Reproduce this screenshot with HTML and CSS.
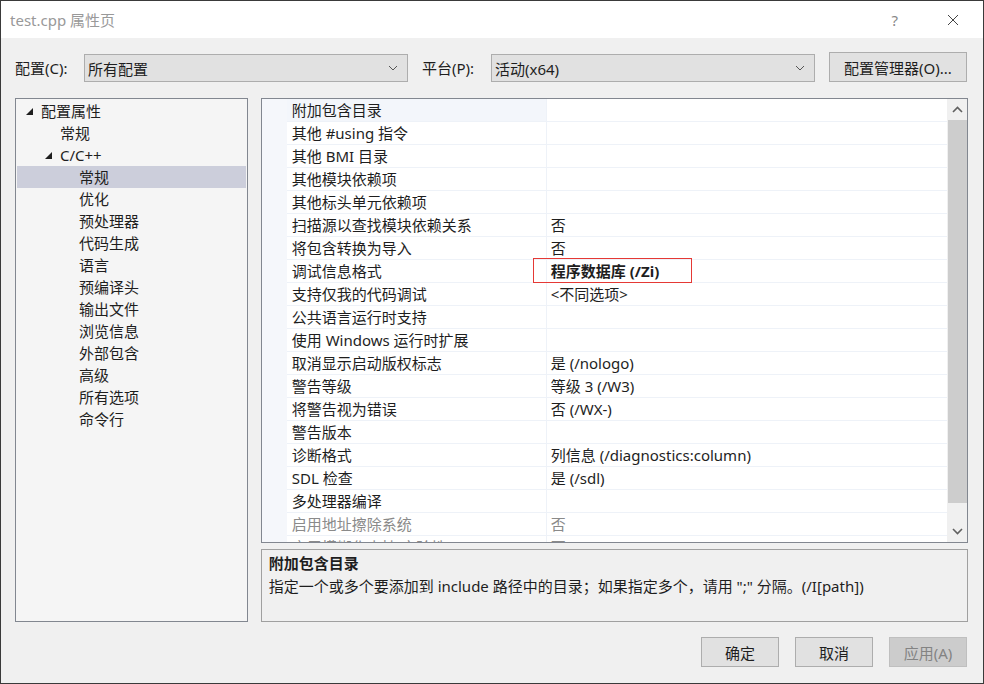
FILE: index.html
```html
<!DOCTYPE html>
<html lang="zh-CN">
<head>
    <meta charset="UTF-8">
    <title>test.cpp 属性页</title>
    <link rel="stylesheet" href="styles.css">
</head>
<body>

<div class="window">
    <!-- Title bar -->
    <div class="titlebar">
        <span class="title">test.cpp 属性页</span>
        <span class="help">?</span>
        <svg class="close" width="12" height="12" viewBox="0 0 12 12">
            <path d="M1 1 L11 11 M11 1 L1 11" stroke="#444" stroke-width="1" fill="none"/>
        </svg>
    </div>

    <div class="dialog">
        <!-- Configuration / platform row -->
        <div class="config-row">
            <label class="config-label">配置(C):</label>
            <div class="combo">
                <span>所有配置</span>
                <svg class="chev" width="10" height="6" viewBox="0 0 10 6"><path d="M1 1 L5 5 L9 1" stroke="#555" stroke-width="1" fill="none"/></svg>
            </div>
            <label class="config-label">平台(P):</label>
            <div class="combo">
                <span>活动(x64)</span>
                <svg class="chev" width="10" height="6" viewBox="0 0 10 6"><path d="M1 1 L5 5 L9 1" stroke="#555" stroke-width="1" fill="none"/></svg>
            </div>
            <button class="btn manager">配置管理器(O)...</button>
        </div>

        <div class="main">
            <!-- Tree -->
            <div class="tree">
                <div class="node lvl0"><svg class="tri" width="8" height="8" viewBox="0 0 8 8"><path d="M0 7 L7 7 L7 0 Z" fill="#1e1e1e"/></svg>配置属性</div>
                <div class="node lvl1">常规</div>
                <div class="node lvl1"><svg class="tri" width="8" height="8" viewBox="0 0 8 8"><path d="M0 7 L7 7 L7 0 Z" fill="#1e1e1e"/></svg>C/C++</div>
                <div class="node lvl2 selected">常规</div>
                <div class="node lvl2">优化</div>
                <div class="node lvl2">预处理器</div>
                <div class="node lvl2">代码生成</div>
                <div class="node lvl2">语言</div>
                <div class="node lvl2">预编译头</div>
                <div class="node lvl2">输出文件</div>
                <div class="node lvl2">浏览信息</div>
                <div class="node lvl2">外部包含</div>
                <div class="node lvl2">高级</div>
                <div class="node lvl2">所有选项</div>
                <div class="node lvl2">命令行</div>
            </div>

            <div class="right">
                <!-- Property grid -->
                <div class="grid">
                    <div class="rows" id="rows"></div>
                    <div class="scrollbar">
                        <div class="sb-btn"><svg width="11" height="7" viewBox="0 0 11 7"><path d="M1 6 L5.5 1.5 L10 6" stroke="#606060" stroke-width="1.6" fill="none"/></svg></div>
                        <div class="sb-thumb"></div>
                        <div class="sb-track"></div>
                        <div class="sb-btn"><svg width="11" height="7" viewBox="0 0 11 7"><path d="M1 1 L5.5 5.5 L10 1" stroke="#606060" stroke-width="1.6" fill="none"/></svg></div>
                    </div>
                </div>

                <!-- Description -->
                <div class="desc">
                    <div class="desc-title">附加包含目录</div>
                    <div class="desc-text">指定一个或多个要添加到 include 路径中的目录；如果指定多个，请用 ";" 分隔。(/I[path])</div>
                </div>
            </div>
        </div>

        <div class="buttons">
            <button class="btn">确定</button>
            <button class="btn">取消</button>
            <button class="btn disabled">应用(A)</button>
        </div>
    </div>
</div>

<script>
    // Property rows: [name, value, flags]
    const props = [
        ["附加包含目录", "", "sel"],
        ["其他 #using 指令", ""],
        ["其他 BMI 目录", ""],
        ["其他模块依赖项", ""],
        ["其他标头单元依赖项", ""],
        ["扫描源以查找模块依赖关系", "否"],
        ["将包含转换为导入", "否"],
        ["调试信息格式", "程序数据库 (/Zi)", "bold"],
        ["支持仅我的代码调试", "<不同选项>"],
        ["公共语言运行时支持", ""],
        ["使用 Windows 运行时扩展", ""],
        ["取消显示启动版权标志", "是 (/nologo)"],
        ["警告等级", "等级 3 (/W3)"],
        ["将警告视为错误", "否 (/WX-)"],
        ["警告版本", ""],
        ["诊断格式", "列信息 (/diagnostics:column)"],
        ["SDL 检查", "是 (/sdl)"],
        ["多处理器编译", ""],
        ["启用地址擦除系统", "否", "dis"],
        ["启用模糊化支持(实验性)", "否", "dis"],
    ];

    const rows = document.getElementById('rows');
    props.forEach(p => {
        const row = document.createElement('div');
        row.className = 'prow' + (p[2] ? ' ' + p[2] : '');
        const margin = document.createElement('div');
        margin.className = 'pmargin';
        const name = document.createElement('div');
        name.className = 'pname';
        name.textContent = p[0];
        const val = document.createElement('div');
        val.className = 'pval';
        val.textContent = p[1];
        if (p[2] === 'bold') {
            const box = document.createElement('div');
            box.className = 'highlight-box';
            val.appendChild(box);
        }
        row.append(margin, name, val);
        rows.appendChild(row);
    });
</script>

</body>
</html>
```

FILE: styles.css
```css
* {
    box-sizing: border-box;
}
body {
    margin: 0;
    font-family: "Noto Sans", "Noto Sans CJK SC", sans-serif;
    font-size: 15px;
    color: #1e1e1e;
    background: #fff;
}
.window {
    width: 984px;
    height: 684px;
    border: 1px solid #3a3a3a;
    display: flex;
    flex-direction: column;
    background: #f0f0f0;
}
.titlebar {
    height: 37px;
    background: #fff;
    display: flex;
    align-items: center;
    padding-left: 9px;
}
.title {
    font-size: 15px;
    color: #999;
    flex: 1;
}
.help {
    font-size: 15px;
    color: #888;
    margin-right: 49px;
}
.close {
    margin-right: 24px;
}
.dialog {
    flex: 1;
    display: flex;
    flex-direction: column;
    padding: 14px 15px 15px 14px;
}
.config-row {
    display: flex;
    align-items: center;
    height: 30px;
}
.config-label {
    width: 69px;
    font-size: 15px;
}
.combo {
    width: 324px;
    height: 28px;
    margin-right: 14px;
    margin-top: 2px;
    background: #e1e1e1;
    border: 1px solid #adadad;
    display: flex;
    align-items: center;
    justify-content: space-between;
    padding: 0 9px 0 3px;
    font-size: 15px;
}
.btn {
    font-family: inherit;
    font-size: 15px;
    color: #1e1e1e;
    background: #e1e1e1;
    border: 1px solid #adadad;
    height: 30px;
    width: 78px;
    padding: 0;
}
.btn.manager {
    width: 138px;
}
.btn.disabled {
    background: #cccccc;
    border-color: #bfbfbf;
    color: #838383;
}
.main {
    display: flex;
    margin-top: 16px;
    gap: 13px;
    height: 524px;
}
.tree {
    width: 233px;
    border: 1px solid #828790;
    background: #f5f5f5;
    padding: 1px;
}
.node {
    height: 22px;
    line-height: 22px;
    position: relative;
}
.node .tri {
    position: absolute;
    top: 8px;
}
.lvl0 { padding-left: 24px; }
.lvl0 .tri { left: 9px; }
.lvl1 { padding-left: 43px; }
.lvl1 .tri { left: 28px; }
.lvl2 { padding-left: 62px; }
.node.selected {
    background: #cccedb;
}
.right {
    width: 708px;
    display: flex;
    flex-direction: column;
    gap: 6px;
}
.grid {
    height: 445px;
    border: 1px solid #828790;
    background: #fff;
    display: flex;
    overflow: hidden;
}
.rows {
    flex: 1;
    overflow: hidden;
}
.prow {
    display: flex;
    height: 23px;
    line-height: 23px;
}
.pmargin {
    width: 25px;
    background: #f5f7fb;
}
.pname {
    width: 259px;
    padding-left: 5px;
    border-bottom: 1px solid #eef2f8;
    white-space: nowrap;
    overflow: hidden;
}
.pval {
    flex: 1;
    padding-left: 4px;
    border-left: 1px solid #eef2f8;
    border-bottom: 1px solid #eef2f8;
    position: relative;
    white-space: nowrap;
}
.prow.sel .pname {
    background: #f3f6fb;
}
.prow.bold .pval {
    font-weight: bold;
}
.prow.dis .pname,
.prow.dis .pval {
    color: #8a8a8a;
}
.highlight-box {
    position: absolute;
    left: -14px;
    top: -2px;
    width: 159px;
    height: 25px;
    border: 1px solid #e53935;
}
.scrollbar {
    width: 20px;
    background: #f0f0f0;
    display: flex;
    flex-direction: column;
}
.sb-btn {
    height: 21px;
    display: flex;
    align-items: center;
    justify-content: center;
}
.sb-thumb {
    height: 383px;
    margin-left: 1px;
    background: #cdcdcd;
}
.sb-track {
    flex: 1;
}
.desc {
    height: 73px;
    border: 1px solid #a0a0a0;
    padding: 2px 7px;
    line-height: 23px;
}
.desc-title {
    font-weight: bold;
}
.buttons {
    display: flex;
    justify-content: flex-end;
    gap: 16px;
    margin-top: 15px;
    padding-right: 1px;
}
```
